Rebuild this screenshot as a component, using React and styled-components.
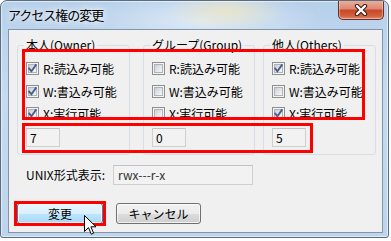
import React from 'react';
import styled, { createGlobalStyle } from 'styled-components';

const Global = createGlobalStyle`
  html, body { margin: 0; padding: 0; background: #ffffff; }
  body {
    font-family: "Noto Sans CJK JP", "Noto Sans", sans-serif;
    font-size: 12px;
    color: #000;
  }
`;

const Window = styled.div`
  position: relative;
  width: 389px;
  height: 238px;
  box-sizing: border-box;
  border: 1px solid #5a6c80;
  border-radius: 7px 7px 3px 3px;
  background:
    radial-gradient(ellipse 60px 20px at 225px 10px, rgba(240, 230, 190, 0.7), rgba(240, 230, 190, 0) 100%),
    radial-gradient(ellipse 120px 30px at 200px 20px, rgba(230, 240, 250, 0.8), rgba(230, 240, 250, 0) 100%),
    linear-gradient(180deg, #b7d0ea 0%, #c6dbf0 40%, #bdd4ec 100%);
  box-shadow: inset 0 0 0 1px rgba(255, 255, 255, 0.55);
  display: flex;
  flex-direction: column;
  overflow: hidden;
`;

const TitleBar = styled.div`
  height: 28px;
  display: flex;
  align-items: flex-start;
  justify-content: space-between;
  padding-left: 7px;
  flex: none;
`;

const Title = styled.div`
  margin-top: 6px;
  font-size: 13px;
  line-height: 16px;
  letter-spacing: -1px;
  color: #000;
  text-shadow: 0 0 6px #fff, 0 0 10px rgba(255, 255, 255, 0.9);
`;

const CloseButton = styled.div`
  width: 46px;
  height: 20px;
  margin-top: -1px;
  margin-right: 4px;
  box-sizing: border-box;
  border: 1px solid #6b2f25;
  border-top: none;
  border-radius: 0 0 5px 5px;
  background: linear-gradient(180deg, #eab2a2 0%, #dc8a73 45%, #c9482a 55%, #d0623f 85%, #e0907a 100%);
  box-shadow: inset 0 0 0 1px rgba(255, 220, 210, 0.45);
  display: flex;
  align-items: center;
  justify-content: center;
`;

const Client = styled.div`
  margin: 0 5px 4px 7px;
  flex: 1;
  box-sizing: border-box;
  border: 1px solid #8196ad;
  background: #f0f0f0;
  padding-top: 8px;
  display: flex;
  flex-direction: column;
`;

const GroupRow = styled.div`
  display: flex;
  padding-left: 8px;
`;

const Group = styled.fieldset`
  margin: 0 0 0 ${(p) => p.$offset}px;
  padding: 0;
  width: ${(p) => p.$width}px;
  box-sizing: border-box;
  min-width: 0;
  border: 1px solid #d5dfe5;
  border-radius: 3px;
`;

const Legend = styled.legend`
  margin-left: 6px;
  padding: 0 2px;
  font-size: 12px;
  line-height: 14px;
`;

const GroupBody = styled.div`
  padding: 10px 0 7px 8px;
  display: flex;
  flex-direction: column;
`;

const CheckList = styled.div`
  display: flex;
  flex-direction: column;
  gap: 9.5px;
`;

const CheckRow = styled.label`
  display: flex;
  align-items: center;
  gap: 4px;
  height: 13px;
  line-height: 13px;
  white-space: nowrap;
`;

const Box = styled.span`
  width: 13px;
  height: 13px;
  box-sizing: border-box;
  border: 1px solid #8e8f8f;
  background: #f4f4f4;
  padding: 1px;
  flex: none;
  display: flex;
`;

const BoxInner = styled.span`
  flex: 1;
  border: 1px solid #aeb3b9;
  background: linear-gradient(135deg, #cbcfd5 0%, #e6e8eb 60%, #f6f6f6 100%);
  position: relative;
`;

const CheckSvg = styled.svg`
  position: absolute;
  left: -2px;
  top: -2px;
`;

const NumBox = styled.div`
  margin-top: 8px;
  width: 34px;
  height: 19px;
  box-sizing: border-box;
  border: 1px solid #cfcfcf;
  border-top-color: #c2c2c2;
  background: #f2f2f2;
  padding-left: 3px;
  font-size: 12px;
  line-height: 17px;
`;

const UnixRow = styled.div`
  margin-top: 10px;
  display: flex;
  align-items: center;
  padding-left: 17px;
`;

const UnixLabel = styled.div`
  width: 87px;
  line-height: 14px;
`;

const UnixBox = styled.div`
  width: 140px;
  height: 20px;
  box-sizing: border-box;
  border: 1px solid #cfcfcf;
  border-top-color: #c2c2c2;
  background: #f2f2f2;
  padding-left: 4px;
  font-size: 12px;
  line-height: 18px;
  color: #333;
`;

const ButtonRow = styled.div`
  margin-top: 18px;
  display: flex;
  padding-left: 8px;
  gap: 13px;
`;

const Button = styled.div`
  width: ${(p) => p.$width}px;
  height: 21px;
  box-sizing: border-box;
  border-radius: 3px;
  border: 1px solid ${(p) => (p.$hover ? '#3c7fb1' : '#707070')};
  background: ${(p) =>
    p.$hover
      ? 'linear-gradient(180deg, #eaf6fd 0%, #d9f0fc 50%, #bee6fd 51%, #a7d9f5 100%)'
      : 'linear-gradient(180deg, #f2f2f2 0%, #ebebeb 50%, #dddddd 51%, #cfcfcf 100%)'};
  box-shadow: inset 0 0 0 1px rgba(255, 255, 255, 0.7);
  display: flex;
  align-items: center;
  justify-content: center;
  font-size: 12px;
  line-height: 14px;
`;

const Annotation = styled.div`
  position: absolute;
  left: ${(p) => p.$x}px;
  top: ${(p) => p.$y}px;
  width: ${(p) => p.$w}px;
  height: ${(p) => p.$h}px;
  box-sizing: border-box;
  border: 3px solid #ff0000;
  pointer-events: none;
`;

const Cursor = styled.svg`
  position: absolute;
  left: 83px;
  top: 214px;
`;

function Check({ checked, label }) {
  return (
    <CheckRow>
      <Box>
        <BoxInner>
          {checked && (
            <CheckSvg width="11" height="11" viewBox="0 0 11 11">
              <path d="M2.2 5.6 L4.4 8.2 L8.8 2.2" fill="none" stroke="#4a5f8f" strokeWidth="1.9" strokeLinecap="square" />
            </CheckSvg>
          )}
        </BoxInner>
      </Box>
      <span>{label}</span>
    </CheckRow>
  );
}

const groups = [
  { title: '本人(Owner)', width: 113, offset: 0, r: true, w: true, x: true, value: '7' },
  { title: 'グループ(Group)', width: 112, offset: 13, r: false, w: false, x: false, value: '0' },
  { title: '他人(Others)', width: 113, offset: 8, r: true, w: false, x: true, value: '5' },
];

export default function App() {
  return (
    <>
      <Global />
      <Window>
        <TitleBar>
          <Title>アクセス権の変更</Title>
          <CloseButton>
            <svg width="14" height="12" viewBox="0 0 14 12">
              <path d="M3 2 L11 10 M11 2 L3 10" stroke="#3a1a14" strokeWidth="4.4" strokeLinecap="round" />
              <path d="M3 2 L11 10 M11 2 L3 10" stroke="#ffffff" strokeWidth="2.4" strokeLinecap="round" />
            </svg>
          </CloseButton>
        </TitleBar>
        <Client>
          <GroupRow>
            {groups.map((g) => (
              <Group key={g.title} $width={g.width} $offset={g.offset}>
                <Legend>{g.title}</Legend>
                <GroupBody>
                  <CheckList>
                    <Check checked={g.r} label="R:読込み可能" />
                    <Check checked={g.w} label="W:書込み可能" />
                    <Check checked={g.x} label="X:実行可能" />
                  </CheckList>
                  <NumBox>{g.value}</NumBox>
                </GroupBody>
              </Group>
            ))}
          </GroupRow>
          <UnixRow>
            <UnixLabel>UNIX形式表示:</UnixLabel>
            <UnixBox>rwx---r-x</UnixBox>
          </UnixRow>
          <ButtonRow>
            <Button $width={86} $hover>変更</Button>
            <Button $width={85}>キャンセル</Button>
          </ButtonRow>
        </Client>
        <Annotation $x={21} $y={48} $w={343} $h={71} />
        <Annotation $x={21} $y={122} $w={291} $h={30} />
        <Annotation $x={13} $y={200} $w={92} $h={25} />
        <Cursor width="13" height="21" viewBox="0 0 13 21">
          <path d="M0.5 0.5 L0.5 16.5 L4.5 12.6 L7.3 19.2 L9.6 18.2 L6.9 11.8 L12 11.8 Z" fill="#ffffff" stroke="#000000" strokeWidth="1" strokeLinejoin="round" />
        </Cursor>
      </Window>
    </>
  );
}
